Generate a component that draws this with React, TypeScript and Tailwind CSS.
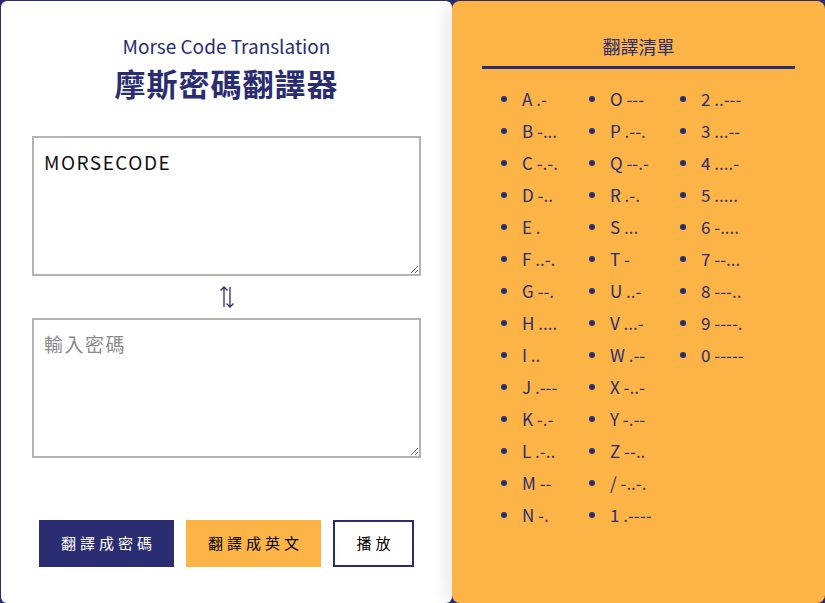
import React from "react";

const NAVY = "#2a2d72";

const col1: [string, string][] = [
  ["A", ".-"], ["B", "-..."], ["C", "-.-."], ["D", "-.."], ["E", "."], ["F", "..-."], ["G", "--."],
  ["H", "...."], ["I", ".."], ["J", ".---"], ["K", "-.-"], ["L", ".-.."], ["M", "--"], ["N", "-."],
];
const col2: [string, string][] = [
  ["O", "---"], ["P", ".--."], ["Q", "--.-"], ["R", ".-."], ["S", "..."], ["T", "-"], ["U", "..-"],
  ["V", "...-"], ["W", ".--"], ["X", "-..-"], ["Y", "-.--"], ["Z", "--.."], ["/", "-..-."], ["1", ".----"],
];
const col3: [string, string][] = [
  ["2", "..---"], ["3", "...--"], ["4", "....-"], ["5", "....."], ["6", "-...."], ["7", "--..."],
  ["8", "---.."], ["9", "----."], ["0", "-----"],
];

function Column({ items, width }: { items: [string, string][]; width: string }) {
  return (
    <ul className={`flex flex-col ${width}`}>
      {items.map(([k, v]) => (
        <li key={k} className="flex h-8 items-center">
          <span className="h-[6px] w-[6px] shrink-0 rounded-full bg-[#2a2d72]" />
          <span className="ml-[15px] whitespace-nowrap text-[17px] text-[#2a2d72]">
            {k} {v}
          </span>
        </li>
      ))}
    </ul>
  );
}

export default function App() {
  return (
    <div
      className="flex h-[603px] w-[825px] overflow-hidden bg-[#2a2d72] pl-px pt-px"
      style={{ fontFamily: '"Noto Sans CJK TC", "Noto Sans", sans-serif' }}
    >
      <div className="flex h-[602px] w-[451px] shrink-0 flex-col items-center rounded-[6px] bg-white">
        <div className="mt-[33px] text-[19px] leading-6 text-[#2a2d72]">Morse Code Translation</div>
        <h1 className="mt-[5px] text-[31px] font-bold leading-10 tracking-[1px] text-[#2a2d72]">摩斯密碼翻譯器</h1>
        <textarea
          className="mt-[33px] h-[140px] w-[389px] border-2 border-[#b3b3b3] px-[10px] py-[10px] text-[19px] leading-7 tracking-[1.5px] text-[#111] outline-none"
          defaultValue="MORSECODE"
        />
        <div className="flex h-[42px] items-center justify-center">
          <svg width="16" height="24" viewBox="0 0 16 24" fill="none" stroke={NAVY} strokeWidth="1.3">
            <path d="M5 22V2M1.5 5.5L5 2l3.5 3.5" />
            <path d="M11 2v20M7.5 18.5L11 22l3.5-3.5" />
          </svg>
        </div>
        <textarea
          className="h-[140px] w-[389px] border-2 border-[#b3b3b3] px-[10px] py-[10px] text-[19px] leading-7 tracking-[1.5px] text-[#111] outline-none placeholder:text-[#8a8a8a]"
          placeholder="輸入密碼"
        />
        <div className="mt-[62px] flex gap-3">
          <button className="h-[47px] w-[135px] bg-[#2a2d72] pl-[4px] text-[15px] tracking-[4px] text-white">翻譯成密碼</button>
          <button className="h-[47px] w-[135px] bg-[#fdb447] pl-[4px] text-[15px] tracking-[4px] text-black">翻譯成英文</button>
          <button className="h-[47px] w-[81px] border-2 border-[#2a2d72] bg-white pl-[4px] text-[15px] tracking-[4px] text-black">播放</button>
        </div>
      </div>
      <div className="relative z-10 h-[602px] flex-1 rounded-[8px] bg-[#fdb447] px-[30px] shadow-[-6px_0_18px_rgba(0,0,0,0.09)]">
        <div className="mt-[32px] text-center text-[18px] leading-[26px] text-[#2a2d72]">翻譯清單</div>
        <div className="mt-[7px] h-[3px] bg-[#2a2d72]" />
        <div className="mt-[14px] flex pl-[19px]">
          <Column items={col1} width="w-[88px]" />
          <Column items={col2} width="w-[91px]" />
          <Column items={col3} width="w-[100px]" />
        </div>
      </div>
    </div>
  );
}
